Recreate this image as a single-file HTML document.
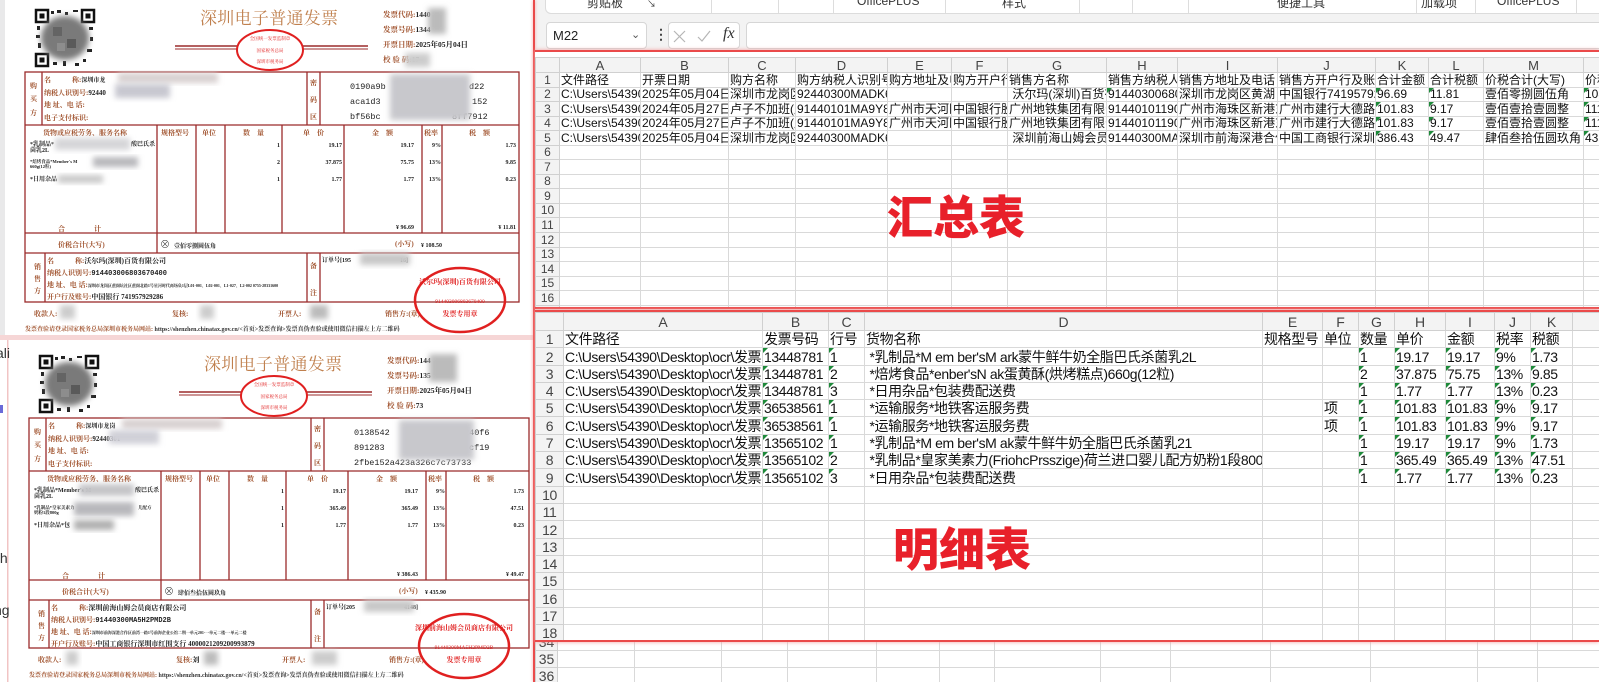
<!DOCTYPE html>
<html><head><meta charset="utf-8">
<style>
*{margin:0;padding:0;box-sizing:border-box}
body{width:1599px;height:682px;overflow:hidden;position:relative;background:#fff;font-family:"Liberation Sans","Noto Sans CJK SC",sans-serif}
.abs{position:absolute}
table.xl{border-collapse:collapse;table-layout:fixed;position:absolute;width:1064px}
table.xl td{border:1px solid #d9d9d9;white-space:nowrap;overflow:hidden;vertical-align:bottom;padding:0 1px;color:#111;position:relative}
table.xl tr.h td{background:#f3f3f3;text-align:center;color:#444;border-color:#d0d0d0;vertical-align:middle}
table.xl td.rn{background:#f3f3f3;text-align:center;color:#444;border-color:#d0d0d0;padding:0}
table.xl td.g::before{content:"";position:absolute;left:0;top:0;border-top:5px solid #1e8a3a;border-right:5px solid transparent}
#t1 td{font-size:12px;height:14.56px;line-height:13px}
#t1 tr.h td{height:15px;font-size:13px}
#t2 td{font-size:14px;height:17.3px;line-height:16px;letter-spacing:-0.4px}
#t2 tr.h td{height:18px;font-size:14px;letter-spacing:0}
.big{position:absolute;color:#e8202a;font-family:"Noto Sans CJK SC",sans-serif;font-weight:900;font-size:46px;letter-spacing:0px;line-height:1}
</style></head><body>

<svg class="abs" style="left:0;top:0" width="535" height="682" viewBox="0 0 535 682" font-family="'Liberation Serif','Noto Serif CJK SC',serif">
<defs>
<filter id="bl" x="-30%" y="-30%" width="160%" height="160%"><feGaussianBlur stdDeviation="3"/></filter>
<g id="qr">
 <rect x="0" y="0" width="60" height="58" fill="#fff"/>
 <rect x="1" y="1" width="12" height="12" fill="none" stroke="#111" stroke-width="2.5"/>
 <rect x="4.5" y="4.5" width="5" height="5" fill="#111"/>
 <rect x="47" y="1" width="12" height="12" fill="none" stroke="#111" stroke-width="2.5"/>
 <rect x="50.5" y="4.5" width="5" height="5" fill="#111"/>
 <rect x="1" y="45" width="12" height="12" fill="none" stroke="#111" stroke-width="2.5"/>
 <rect x="4.5" y="48.5" width="5" height="5" fill="#111"/>
 <path d="M16 2h3v3h-3zM22 1h4v3h-4zM30 3h3v3h-3zM38 1h5v2h-5zM2 17h3v4h-3zM1 26h4v3h-4zM3 34h3v5h-3zM54 18h4v3h-4zM55 28h3v4h-3zM52 40h5v3h-5zM18 53h4v3h-4zM28 52h3v5h-3zM40 54h4v3h-4zM48 50h3v3h-3z" fill="#222"/>
 <ellipse cx="30" cy="29" rx="24" ry="22" fill="#7a7a7a" filter="url(#bl)"/>
 <rect x="18" y="18" width="9" height="9" fill="#555" opacity=".6"/><rect x="32" y="30" width="9" height="9" fill="#444" opacity=".6"/><rect x="22" y="34" width="8" height="8" fill="#999" opacity=".6"/>
</g>
</defs>

<rect x="0" y="0" width="5" height="336" fill="#e9e9ea"/>
<rect x="0" y="335" width="535" height="5" fill="#f6d6d6"/>
<rect x="0" y="340" width="8" height="342" fill="#fff"/>
<rect x="7" y="340" width="1.5" height="342" fill="#f1c4c4"/>
<g font-family="'Liberation Sans',sans-serif" font-size="14" fill="#333">
<text x="-4" y="358">ali</text><text x="-4" y="563">th</text><text x="-6" y="615">ng</text>
</g>
<rect x="0" y="405" width="3" height="8" fill="#6a6ad8"/>

<g>
<use href="#qr" x="35" y="9"/>
<text x="200" y="24" font-size="17" fill="#c0804e" letter-spacing="0.3">深圳电子普通发票</text>
<line x1="175" y1="46" x2="368" y2="46" stroke="#9b2b2b" stroke-width="1.5"/>
<line x1="175" y1="49" x2="368" y2="49" stroke="#9b2b2b" stroke-width="1"/>
<ellipse cx="270" cy="50" rx="33" ry="20" fill="#fff" stroke="#e02020" stroke-width="2"/>
<g font-size="4.5" fill="#e02020" text-anchor="middle"><text x="270" y="40">全国统一发票监制章</text><text x="270" y="52">国家税务总局</text><text x="270" y="63">深圳市税务局</text></g>
<g font-size="7.5" fill="#a0522d" font-weight="bold"><text x="383" y="17">发票代码:<tspan fill="#222">1440</tspan></text><text x="383" y="32">发票号码:<tspan fill="#222">1344</tspan></text><text x="383" y="47">开票日期:<tspan fill="#222">2025年05月04日</tspan></text><text x="383" y="62">校 验 码:<tspan fill="#222">17</tspan></text></g>
<rect x="428" y="8" width="18" height="26" fill="#bbb" filter="url(#bl)"/>
<rect x="405" y="53" width="25" height="14" fill="#ccc" filter="url(#bl)"/>

<g stroke="#9b2b2b" stroke-width="1.3" fill="none">
<rect x="25" y="72" width="494" height="230"/>
<line x1="25" y1="125" x2="519" y2="125"/><line x1="25" y1="233" x2="519" y2="233"/><line x1="25" y1="253" x2="519" y2="253"/>
<line x1="42" y1="72" x2="42" y2="125"/><line x1="307" y1="72" x2="307" y2="125"/><line x1="320" y1="72" x2="320" y2="125"/>
<line x1="157" y1="125" x2="157" y2="253"/><line x1="196" y1="125" x2="196" y2="233"/><line x1="225" y1="125" x2="225" y2="233"/><line x1="282" y1="125" x2="282" y2="233"/><line x1="344" y1="125" x2="344" y2="233"/><line x1="422" y1="125" x2="422" y2="233"/><line x1="442" y1="125" x2="442" y2="233"/>
<line x1="45" y1="253" x2="45" y2="302"/><line x1="307" y1="253" x2="307" y2="302"/><line x1="320" y1="253" x2="320" y2="302"/>
</g>
<g font-size="7" fill="#a0522d" font-weight="bold">
<text x="30" y="88">购</text><text x="30" y="101">买</text><text x="30" y="115">方</text>
<text x="44" y="82">名　　　称:<tspan fill="#222" font-size="6">深圳市龙</tspan></text>
<text x="44" y="95">纳税人识别号:<tspan fill="#222">92440</tspan></text>
<text x="44" y="107">地 址、电 话:</text>
<text x="44" y="120">电子支付标识:</text>
<text x="310" y="85">密</text><text x="310" y="102">码</text><text x="310" y="119">区</text>
<text x="43" y="135">货物或应税劳务、服务名称</text><text x="161" y="135">规格型号</text><text x="202" y="135">单位</text><text x="243" y="135">数　量</text><text x="303" y="135">单　价</text><text x="372" y="135">金　额</text><text x="424" y="135">税率</text><text x="469" y="135">税　额</text>
<text x="58" y="231">合</text><text x="94" y="231">计</text>
<text x="58" y="247">价税合计(大写)</text>
<text x="395" y="246">(小写)</text>
<text x="34" y="269">销</text><text x="34" y="281">售</text><text x="34" y="293">方</text>
<text x="47" y="263">名　　　称:<tspan fill="#222">沃尔玛(深圳)百货有限公司</tspan></text>
<text x="47" y="275">纳税人识别号:<tspan fill="#222" font-family="'Liberation Mono',monospace">914403006803670400</tspan></text>
<text x="47" y="287">地 址、电 话:<tspan fill="#222" font-size="4">深圳市龙岗区黄阁坑社区黄阁北路1号星河时代商场负1层L01-001、L02-001、L1-027、L2-002 0755-28331600</tspan></text>
<text x="47" y="299">开户行及账号:<tspan fill="#222">中国银行 741957929286</tspan></text>
<text x="310" y="268">备</text><text x="310" y="295">注</text>
<text x="34" y="316">收款人:</text><text x="172" y="316">复核:</text><text x="278" y="316">开票人:</text><text x="385" y="316">销售方:(章)</text>
</g>
<g font-size="6" fill="#222" font-weight="bold">
<text x="30" y="146">*乳制品*</text><text x="131" y="146">酸巴氏杀</text><text x="30" y="152">菌乳2L</text>
<text x="30" y="163" font-size="4.5">*焙烤食品*Member's M</text><text x="30" y="168" font-size="4.5">660g(12粒)</text>
<text x="30" y="181">*日用杂品</text>
<g text-anchor="end"><text x="280" y="147">1</text><text x="280" y="164">2</text><text x="280" y="181">1</text>
<text x="342" y="147">19.17</text><text x="342" y="164">37.875</text><text x="342" y="181">1.77</text>
<text x="414" y="147">19.17</text><text x="414" y="164">75.75</text><text x="414" y="181">1.77</text>
<text x="441" y="147">9%</text><text x="441" y="164">13%</text><text x="441" y="181">13%</text>
<text x="516" y="147">1.73</text><text x="516" y="164">9.85</text><text x="516" y="181">0.23</text>
<text x="414" y="229">¥ 96.69</text><text x="516" y="229">¥ 11.81</text></g>
<text x="160" y="248" font-size="10">⊗</text><text x="174" y="248">壹佰零捌圆伍角</text>
<text x="421" y="247">¥ 108.50</text>
<text x="322" y="262">订单号[195</text><text x="400" y="262">16]</text>
</g>
<g font-family="'Liberation Mono',monospace" font-size="8.5" fill="#222"><text x="350" y="89">0190a9b</text><text x="469" y="89">d22</text><text x="350" y="104">aca1d3</text><text x="472" y="104">152</text><text x="350" y="119">bf56bc</text><text x="452" y="119">8ff7912</text></g>
<rect x="390" y="74" width="80" height="46" fill="#c8c8cc" filter="url(#bl)"/>
<rect x="118" y="73" width="100" height="10" fill="#d8d0d0" filter="url(#bl)"/>
<rect x="115" y="84" width="55" height="14" fill="#c8c8d0" filter="url(#bl)"/>
<rect x="55" y="138" width="75" height="12" fill="#d5d5d8" filter="url(#bl)"/>
<rect x="93" y="157" width="45" height="10" fill="#b8b8bc" filter="url(#bl)"/>
<rect x="58" y="175" width="45" height="8" fill="#c8c8c8" filter="url(#bl)"/>
<rect x="360" y="253" width="50" height="12" fill="#c8c8c8" filter="url(#bl)"/>
<rect x="60" y="305" width="15" height="14" fill="#ccc" filter="url(#bl)"/><rect x="200" y="305" width="14" height="14" fill="#ccc" filter="url(#bl)"/><rect x="310" y="305" width="18" height="14" fill="#bbb" filter="url(#bl)"/>
<text x="25" y="331" font-size="6" fill="#a0522d" font-weight="bold">发票查验请登录国家税务总局深圳市税务局网站: <tspan fill="#333">https://shenzhen.chinatax.gov.cn/&lt;首页&gt;发票查询&gt;发票真伪查验或使用微信扫描左上方二维码</tspan></text>
<ellipse cx="460" cy="300" rx="45" ry="32" fill="none" stroke="#e02020" stroke-width="2.5"/>
<text x="460" y="284" font-size="7" fill="#e02020" text-anchor="middle" font-weight="bold">沃尔玛(深圳)百货有限公司</text>
<text x="460" y="303" font-size="5.5" fill="#e02020" text-anchor="middle">914403006803670400</text>
<text x="460" y="316" font-size="7" fill="#e02020" text-anchor="middle" font-weight="bold">发票专用章</text>
</g>

<g transform="translate(4,346)">
<use href="#qr" x="35" y="9"/>
<text x="200" y="24" font-size="17" fill="#c0804e" letter-spacing="0.3">深圳电子普通发票</text>
<line x1="175" y1="46" x2="368" y2="46" stroke="#9b2b2b" stroke-width="1.5"/>
<line x1="175" y1="49" x2="368" y2="49" stroke="#9b2b2b" stroke-width="1"/>
<ellipse cx="270" cy="50" rx="33" ry="20" fill="#fff" stroke="#e02020" stroke-width="2"/>
<g font-size="4.5" fill="#e02020" text-anchor="middle"><text x="270" y="40">全国统一发票监制章</text><text x="270" y="52">国家税务总局</text><text x="270" y="63">深圳市税务局</text></g>
<g font-size="7.5" fill="#a0522d" font-weight="bold"><text x="383" y="17">发票代码:<tspan fill="#222">144</tspan></text><text x="383" y="32">发票号码:<tspan fill="#222">135</tspan></text><text x="383" y="47">开票日期:<tspan fill="#222">2025年05月04日</tspan></text><text x="383" y="62">校 验 码:<tspan fill="#222">73</tspan></text></g>
<rect x="425" y="8" width="28" height="28" fill="#bbb" filter="url(#bl)"/>

<g stroke="#9b2b2b" stroke-width="1.3" fill="none">
<rect x="25" y="72" width="500" height="230"/>
<line x1="25" y1="125" x2="525" y2="125"/><line x1="25" y1="234" x2="525" y2="234"/><line x1="25" y1="254" x2="525" y2="254"/>
<line x1="42" y1="72" x2="42" y2="125"/><line x1="307" y1="72" x2="307" y2="125"/><line x1="320" y1="72" x2="320" y2="125"/>
<line x1="157" y1="125" x2="157" y2="254"/><line x1="196" y1="125" x2="196" y2="234"/><line x1="225" y1="125" x2="225" y2="234"/><line x1="282" y1="125" x2="282" y2="234"/><line x1="344" y1="125" x2="344" y2="234"/><line x1="422" y1="125" x2="422" y2="234"/><line x1="442" y1="125" x2="442" y2="234"/>
<line x1="45" y1="254" x2="45" y2="302"/><line x1="307" y1="254" x2="307" y2="302"/><line x1="320" y1="254" x2="320" y2="302"/>
</g>
<g font-size="7" fill="#a0522d" font-weight="bold">
<text x="30" y="88">购</text><text x="30" y="101">买</text><text x="30" y="115">方</text>
<text x="44" y="82">名　　　称:<tspan fill="#222" font-size="6">深圳市龙岗</tspan></text>
<text x="44" y="95">纳税人识别号:<tspan fill="#222">92440301</tspan></text>
<text x="44" y="107">地 址、电 话:</text>
<text x="44" y="120">电子支付标识:</text>
<text x="310" y="85">密</text><text x="310" y="102">码</text><text x="310" y="119">区</text>
<text x="43" y="135">货物或应税劳务、服务名称</text><text x="161" y="135">规格型号</text><text x="202" y="135">单位</text><text x="243" y="135">数　量</text><text x="303" y="135">单　价</text><text x="372" y="135">金　额</text><text x="424" y="135">税率</text><text x="469" y="135">税　额</text>
<text x="58" y="232">合</text><text x="94" y="232">计</text>
<text x="58" y="248">价税合计(大写)</text>
<text x="395" y="247">(小写)</text>
<text x="34" y="270">销</text><text x="34" y="282">售</text><text x="34" y="294">方</text>
<text x="47" y="264">名　　　称:<tspan fill="#222">深圳前海山姆会员商店有限公司</tspan></text>
<text x="47" y="276">纳税人识别号:<tspan fill="#222" font-family="'Liberation Mono',monospace">91440300MA5H2PMD2B</tspan></text>
<text x="47" y="288">地 址、电 话:<tspan fill="#222" font-size="4">深圳市前海深港合作区前湾一路1号前海企业公馆二期一单元201-一单元二楼-一单元二楼</tspan></text>
<text x="47" y="300">开户行及账号:<tspan fill="#222">中国工商银行深圳市红围支行 4000021209200993879</tspan></text>
<text x="310" y="268">备</text><text x="310" y="295">注</text>
<text x="34" y="316">收款人:</text><text x="172" y="316">复核:<tspan fill="#222">刘</tspan></text><text x="278" y="316">开票人:</text><text x="385" y="316">销售方:(章)</text>
</g>
<g font-size="6" fill="#222" font-weight="bold">
<text x="30" y="146">*乳制品*Member's M</text><text x="131" y="146">酸巴氏杀</text><text x="30" y="152">菌乳2L</text>
<text x="30" y="163" font-size="4.5">*乳制品*皇家美素力</text><text x="134" y="163" font-size="4.5">儿配方</text><text x="30" y="168" font-size="4.5">奶粉1段800g</text>
<text x="30" y="181">*日用杂品*包</text>
<g text-anchor="end"><text x="280" y="147">1</text><text x="280" y="164">1</text><text x="280" y="181">1</text>
<text x="342" y="147">19.17</text><text x="342" y="164">365.49</text><text x="342" y="181">1.77</text>
<text x="414" y="147">19.17</text><text x="414" y="164">365.49</text><text x="414" y="181">1.77</text>
<text x="441" y="147">9%</text><text x="441" y="164">13%</text><text x="441" y="181">13%</text>
<text x="520" y="147">1.73</text><text x="520" y="164">47.51</text><text x="520" y="181">0.23</text>
<text x="414" y="230">¥ 386.43</text><text x="520" y="230">¥ 49.47</text></g>
<text x="160" y="249" font-size="10">⊗</text><text x="174" y="249">肆佰叁拾伍圆玖角</text>
<text x="421" y="248">¥ 435.90</text>
<text x="322" y="263">订单号[205</text><text x="400" y="263">4148]</text>
</g>
<g font-family="'Liberation Mono',monospace" font-size="8.5" fill="#222"><text x="350" y="89">0138542</text><text x="460" y="89">240f6</text><text x="350" y="104">891283</text><text x="465" y="104">cf19</text><text x="350" y="119">2fbe152a423a326c7c73733</text></g>
<rect x="395" y="74" width="75" height="40" fill="#c8c8cc" filter="url(#bl)"/>
<rect x="118" y="73" width="100" height="10" fill="#d8d0d0" filter="url(#bl)"/>
<rect x="105" y="84" width="50" height="14" fill="#d0d0d8" filter="url(#bl)"/>
<rect x="75" y="138" width="55" height="12" fill="#c5c5c8" filter="url(#bl)"/>
<rect x="70" y="156" width="60" height="14" fill="#b8b8bc" filter="url(#bl)"/>
<rect x="70" y="174" width="40" height="10" fill="#b0b0b0" filter="url(#bl)"/>
<rect x="360" y="254" width="50" height="12" fill="#c8c8c8" filter="url(#bl)"/>
<rect x="62" y="305" width="12" height="14" fill="#ccc" filter="url(#bl)"/><rect x="200" y="305" width="14" height="14" fill="#bbb" filter="url(#bl)"/><rect x="308" y="305" width="25" height="14" fill="#ccc" filter="url(#bl)"/>
<text x="25" y="331" font-size="6" fill="#a0522d" font-weight="bold">发票查验请登录国家税务总局深圳市税务局网站: <tspan fill="#333">https://shenzhen.chinatax.gov.cn/&lt;首页&gt;发票查询&gt;发票真伪查验或使用微信扫描左上方二维码</tspan></text>
<ellipse cx="460" cy="300" rx="45" ry="32" fill="none" stroke="#e02020" stroke-width="2.5"/>
<text x="460" y="284" font-size="7" fill="#e02020" text-anchor="middle" font-weight="bold">深圳前海山姆会员商店有限公司</text>
<text x="460" y="303" font-size="5.5" fill="#e02020" text-anchor="middle">91440300MA5H2PMD2B</text>
<text x="460" y="316" font-size="7" fill="#e02020" text-anchor="middle" font-weight="bold">发票专用章</text>
</g>
</svg>

<div class="abs" style="left:535px;top:0;width:1064px;height:682px;background:#f3f3f3"></div>
<div class="abs" style="left:545px;top:-10px;width:1060px;height:24px;background:#fff;border:1px solid #dcdcdc;border-radius:6px"></div>
<div class="abs" style="left:535px;top:-6px;width:1064px;height:16px;font-size:12px;color:#333">
 <span class="abs" style="left:52px">剪贴板</span><span class="abs" style="left:112px;font-size:9px;top:3px">↘</span>
 <span class="abs" style="left:322px">OfficePLUS</span><span class="abs" style="left:467px">样式</span>
 <span class="abs" style="left:742px">便捷工具</span><span class="abs" style="left:886px">加载项</span><span class="abs" style="left:962px">OfficePLUS</span>
</div>
<div class="abs" style="top:0;height:13px;left:0;width:1599px">
 <div class="abs" style="left:711px;width:1px;height:13px;background:#ddd"></div><div class="abs" style="left:778px;width:1px;height:13px;background:#ddd"></div><div class="abs" style="left:833px;width:1px;height:13px;background:#ddd"></div><div class="abs" style="left:945px;width:1px;height:13px;background:#ddd"></div><div class="abs" style="left:1079px;width:1px;height:13px;background:#ddd"></div><div class="abs" style="left:1132px;width:1px;height:13px;background:#ddd"></div><div class="abs" style="left:1188px;width:1px;height:13px;background:#ddd"></div><div class="abs" style="left:1416px;width:1px;height:13px;background:#ddd"></div><div class="abs" style="left:1475px;width:1px;height:13px;background:#ddd"></div><div class="abs" style="left:1576px;width:1px;height:13px;background:#ddd"></div>
</div>
<div class="abs" style="left:546px;top:22px;width:101px;height:27px;background:#fff;border:1px solid #d6d6d6;border-radius:4px;font-size:13px;line-height:25px;padding-left:6px;color:#222">M22<span class="abs" style="left:84px;top:0;font-size:11px;color:#555">⌄</span></div>
<div class="abs" style="left:654px;top:26px;font-size:14px;color:#444;font-weight:bold">⋮</div>
<div class="abs" style="left:668px;top:22px;width:72px;height:27px;background:#fff;border:1px solid #d6d6d6;border-radius:4px">
 <svg width="72" height="27" class="abs" style="left:0;top:0"><path d="M5 8l11 11M16 8l-11 11" stroke="#b5b5b5" stroke-width="1.2"/><path d="M29 14l4 4 8-10" stroke="#b5b5b5" stroke-width="1.2" fill="none"/></svg>
 <span class="abs" style="left:54px;top:2px;font-family:'Liberation Serif',serif;font-style:italic;font-size:16px;color:#333">fx</span></div>
<div class="abs" style="left:746px;top:22px;width:860px;height:27px;background:#fff;border:1px solid #d6d6d6;border-radius:4px"></div>

<div class="abs" style="left:533px;top:0;width:2px;height:682px;background:#ea4a4a;box-shadow:0 0 3px #f4a0a0"></div>

<div class="abs" style="left:535px;top:641px;width:1064px;height:41px;background:#fff;overflow:hidden">
 <table class="xl" id="t3" style="left:0;top:-8px">
  <colgroup><col style="width:22px"><col style="width:77px"><col style="width:87px"><col style="width:66px"><col style="width:89px"><col style="width:63px"><col style="width:55px"><col style="width:106px"><col style="width:70px"><col style="width:100px"><col style="width:100px"><col style="width:107px"><col style="width:60px"><col style="width:62px"></colgroup>
  <tr><td class="rn" style="height:17px;font-size:14px">34</td><td></td><td></td><td></td><td></td><td></td><td></td><td></td><td></td><td></td><td></td><td></td><td></td><td></td></tr>
  <tr><td class="rn" style="height:17px;font-size:14px">35</td><td></td><td></td><td></td><td></td><td></td><td></td><td></td><td></td><td></td><td></td><td></td><td></td><td></td></tr>
  <tr><td class="rn" style="height:17px;font-size:14px">36</td><td></td><td></td><td></td><td></td><td></td><td></td><td></td><td></td><td></td><td></td><td></td><td></td><td></td></tr>
 </table>
</div>

<div class="abs" style="left:535px;top:50px;width:1064px;height:259px;background:#fff;border-top:2px solid #ea4a4a;border-bottom:2px solid #ea4a4a;box-shadow:0 0 4px #f3a0a0;overflow:hidden">
<table class="xl" id="t1" style="left:0;top:5px">
<colgroup><col style="width:24px"><col style="width:81px"><col style="width:88px"><col style="width:67px"><col style="width:92px"><col style="width:64px"><col style="width:56px"><col style="width:99px"><col style="width:71px"><col style="width:100px"><col style="width:98px"><col style="width:53px"><col style="width:55px"><col style="width:100px"><col style="width:16px"></colgroup>
<tr class="h"><td style="background:#f3f3f3"></td><td>A</td><td>B</td><td>C</td><td>D</td><td>E</td><td>F</td><td>G</td><td>H</td><td>I</td><td>J</td><td>K</td><td>L</td><td>M</td><td></td></tr>
<tr><td class="rn">1</td><td>文件路径</td><td>开票日期</td><td>购方名称</td><td>购方纳税人识别号</td><td>购方地址及电话</td><td>购方开户行及账号</td><td>销售方名称</td><td>销售方纳税人识别号</td><td>销售方地址及电话</td><td>销售方开户行及账号</td><td>合计金额</td><td>合计税额</td><td>价税合计(大写)</td><td>价税合计(小写)</td></tr>
<tr><td class="rn">2</td><td>C:\Users\54390\Desktop</td><td>2025年05月04日</td><td>深圳市龙岗区</td><td>92440300MADK6</td><td></td><td></td><td>&nbsp;沃尔玛(深圳)百货有限公司</td><td class="g">914403006803670400</td><td>深圳市龙岗区黄湖</td><td>中国银行741957929286</td><td class="g">96.69</td><td class="g">11.81</td><td>壹佰零捌圆伍角</td><td class="g">108.50</td></tr>
<tr><td class="rn">3</td><td>C:\Users\54390\Desktop</td><td>2024年05月27日</td><td>卢子不加班(广州)</td><td>91440101MA9Y8</td><td>广州市天河区</td><td>中国银行股份</td><td>广州地铁集团有限公司</td><td>91440101190</td><td>广州市海珠区新港东</td><td>广州市建行大德路支行</td><td class="g">101.83</td><td class="g">9.17</td><td>壹佰壹拾壹圆整</td><td class="g">111.00</td></tr>
<tr><td class="rn">4</td><td>C:\Users\54390\Desktop</td><td>2024年05月27日</td><td>卢子不加班(广州)</td><td>91440101MA9Y8</td><td>广州市天河区</td><td>中国银行股份</td><td>广州地铁集团有限公司</td><td>91440101190</td><td>广州市海珠区新港东</td><td>广州市建行大德路支行</td><td class="g">101.83</td><td class="g">9.17</td><td>壹佰壹拾壹圆整</td><td class="g">111.00</td></tr>
<tr><td class="rn">5</td><td>C:\Users\54390\Desktop</td><td>2025年05月04日</td><td>深圳市龙岗区</td><td>92440300MADK6</td><td></td><td></td><td>&nbsp;深圳前海山姆会员商店</td><td>91440300MA5H2</td><td>深圳市前海深港合作区</td><td>中国工商银行深圳市</td><td class="g">386.43</td><td class="g">49.47</td><td>肆佰叁拾伍圆玖角</td><td class="g">435.90</td></tr>
<tr><td class="rn">6</td><td></td><td></td><td></td><td></td><td></td><td></td><td></td><td></td><td></td><td></td><td></td><td></td><td></td><td></td></tr>
<tr><td class="rn">7</td><td></td><td></td><td></td><td></td><td></td><td></td><td></td><td></td><td></td><td></td><td></td><td></td><td></td><td></td></tr>
<tr><td class="rn">8</td><td></td><td></td><td></td><td></td><td></td><td></td><td></td><td></td><td></td><td></td><td></td><td></td><td></td><td></td></tr>
<tr><td class="rn">9</td><td></td><td></td><td></td><td></td><td></td><td></td><td></td><td></td><td></td><td></td><td></td><td></td><td></td><td></td></tr>
<tr><td class="rn">10</td><td></td><td></td><td></td><td></td><td></td><td></td><td></td><td></td><td></td><td></td><td></td><td></td><td></td><td></td></tr>
<tr><td class="rn">11</td><td></td><td></td><td></td><td></td><td></td><td></td><td></td><td></td><td></td><td></td><td></td><td></td><td></td><td></td></tr>
<tr><td class="rn">12</td><td></td><td></td><td></td><td></td><td></td><td></td><td></td><td></td><td></td><td></td><td></td><td></td><td></td><td></td></tr>
<tr><td class="rn">13</td><td></td><td></td><td></td><td></td><td></td><td></td><td></td><td></td><td></td><td></td><td></td><td></td><td></td><td></td></tr>
<tr><td class="rn">14</td><td></td><td></td><td></td><td></td><td></td><td></td><td></td><td></td><td></td><td></td><td></td><td></td><td></td><td></td></tr>
<tr><td class="rn">15</td><td></td><td></td><td></td><td></td><td></td><td></td><td></td><td></td><td></td><td></td><td></td><td></td><td></td><td></td></tr>
<tr><td class="rn">16</td><td></td><td></td><td></td><td></td><td></td><td></td><td></td><td></td><td></td><td></td><td></td><td></td><td></td><td></td></tr>
<tr><td class="rn">17</td><td></td><td></td><td></td><td></td><td></td><td></td><td></td><td></td><td></td><td></td><td></td><td></td><td></td><td></td></tr>
</table>
<div class="big" style="left:352px;top:140px">汇总表</div>
</div>

<div class="abs" style="left:535px;top:310px;width:1064px;height:332px;background:#fff;border-top:2px solid #ea4a4a;border-bottom:2px solid #ea4a4a;box-shadow:0 0 4px #f3a0a0;overflow:hidden">
<table class="xl" id="t2" style="left:0;top:0">
<colgroup><col style="width:28px"><col style="width:199px"><col style="width:66px"><col style="width:36px"><col style="width:398px"><col style="width:60px"><col style="width:36px"><col style="width:36px"><col style="width:51px"><col style="width:49px"><col style="width:36px"><col style="width:42px"><col style="width:27px"></colgroup>
<tr class="h"><td style="background:#f3f3f3"></td><td>A</td><td>B</td><td>C</td><td>D</td><td>E</td><td>F</td><td>G</td><td>H</td><td>I</td><td>J</td><td>K</td><td></td></tr>
<tr><td class="rn">1</td><td>文件路径</td><td>发票号码</td><td>行号</td><td>货物名称</td><td>规格型号</td><td>单位</td><td>数量</td><td>单价</td><td>金额</td><td>税率</td><td>税额</td><td></td></tr>
<tr><td class="rn">2</td><td>C:\Users\54390\Desktop\ocr\发票</td><td class="g">13448781</td><td class="g">1</td><td>&nbsp;*乳制品*M em ber'sM ark蒙牛鲜牛奶全脂巴氏杀菌乳2L</td><td></td><td></td><td class="g">1</td><td class="g">19.17</td><td class="g">19.17</td><td class="g">9%</td><td class="g">1.73</td><td></td></tr>
<tr><td class="rn">3</td><td>C:\Users\54390\Desktop\ocr\发票</td><td class="g">13448781</td><td class="g">2</td><td>&nbsp;*焙烤食品*enber'sN ak蛋黄酥(烘烤糕点)660g(12粒)</td><td></td><td></td><td class="g">2</td><td class="g">37.875</td><td class="g">75.75</td><td class="g">13%</td><td class="g">9.85</td><td></td></tr>
<tr><td class="rn">4</td><td>C:\Users\54390\Desktop\ocr\发票</td><td class="g">13448781</td><td class="g">3</td><td>&nbsp;*日用杂品*包装费配送费</td><td></td><td></td><td class="g">1</td><td class="g">1.77</td><td class="g">1.77</td><td class="g">13%</td><td class="g">0.23</td><td></td></tr>
<tr><td class="rn">5</td><td>C:\Users\54390\Desktop\ocr\发票</td><td class="g">36538561</td><td class="g">1</td><td>&nbsp;*运输服务*地铁客运服务费</td><td></td><td>项</td><td class="g">1</td><td class="g">101.83</td><td class="g">101.83</td><td class="g">9%</td><td class="g">9.17</td><td></td></tr>
<tr><td class="rn">6</td><td>C:\Users\54390\Desktop\ocr\发票</td><td class="g">36538561</td><td class="g">1</td><td>&nbsp;*运输服务*地铁客运服务费</td><td></td><td>项</td><td class="g">1</td><td class="g">101.83</td><td class="g">101.83</td><td class="g">9%</td><td class="g">9.17</td><td></td></tr>
<tr><td class="rn">7</td><td>C:\Users\54390\Desktop\ocr\发票</td><td class="g">13565102</td><td class="g">1</td><td>&nbsp;*乳制品*M em ber'sM ak蒙牛鲜牛奶全脂巴氏杀菌乳21</td><td></td><td></td><td class="g">1</td><td class="g">19.17</td><td class="g">19.17</td><td class="g">9%</td><td class="g">1.73</td><td></td></tr>
<tr><td class="rn">8</td><td>C:\Users\54390\Desktop\ocr\发票</td><td class="g">13565102</td><td class="g">2</td><td>&nbsp;*乳制品*皇家美素力(FriohcPrsszige)荷兰进口婴儿配方奶粉1段800</td><td></td><td></td><td class="g">1</td><td class="g">365.49</td><td class="g">365.49</td><td class="g">13%</td><td class="g">47.51</td><td></td></tr>
<tr><td class="rn">9</td><td>C:\Users\54390\Desktop\ocr\发票</td><td class="g">13565102</td><td class="g">3</td><td>&nbsp;*日用杂品*包装费配送费</td><td></td><td></td><td class="g">1</td><td class="g">1.77</td><td class="g">1.77</td><td class="g">13%</td><td class="g">0.23</td><td></td></tr>
<tr><td class="rn">10</td><td></td><td></td><td></td><td></td><td></td><td></td><td></td><td></td><td></td><td></td><td></td><td></td></tr>
<tr><td class="rn">11</td><td></td><td></td><td></td><td></td><td></td><td></td><td></td><td></td><td></td><td></td><td></td><td></td></tr>
<tr><td class="rn">12</td><td></td><td></td><td></td><td></td><td></td><td></td><td></td><td></td><td></td><td></td><td></td><td></td></tr>
<tr><td class="rn">13</td><td></td><td></td><td></td><td></td><td></td><td></td><td></td><td></td><td></td><td></td><td></td><td></td></tr>
<tr><td class="rn">14</td><td></td><td></td><td></td><td></td><td></td><td></td><td></td><td></td><td></td><td></td><td></td><td></td></tr>
<tr><td class="rn">15</td><td></td><td></td><td></td><td></td><td></td><td></td><td></td><td></td><td></td><td></td><td></td><td></td></tr>
<tr><td class="rn">16</td><td></td><td></td><td></td><td></td><td></td><td></td><td></td><td></td><td></td><td></td><td></td><td></td></tr>
<tr><td class="rn">17</td><td></td><td></td><td></td><td></td><td></td><td></td><td></td><td></td><td></td><td></td><td></td><td></td></tr>
<tr><td class="rn">18</td><td></td><td></td><td></td><td></td><td></td><td></td><td></td><td></td><td></td><td></td><td></td><td></td></tr>
</table>
<div class="big" style="left:358px;top:212px">明细表</div>
</div>

</body></html>
